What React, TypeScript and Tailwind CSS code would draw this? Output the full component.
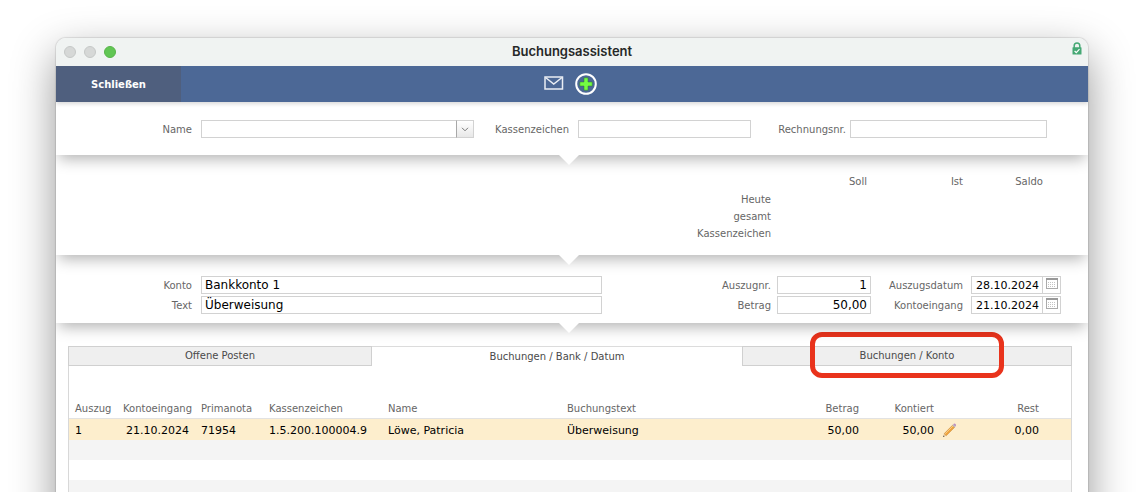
import type { ReactNode } from 'react'

interface Booking {
  auszug: string
  eingang: string
  primanota: string
  kassenzeichen: string
  name: string
  text: string
  betrag: string
  kontiert: string
  rest: string
}

const BOOKINGS: Booking[] = [
  {
    auszug: '1',
    eingang: '21.10.2024',
    primanota: '71954',
    kassenzeichen: '1.5.200.100004.9',
    name: 'Löwe, Patricia',
    text: 'Überweisung',
    betrag: '50,00',
    kontiert: '50,00',
    rest: '0,00',
  },
]

const EMPTY_ROWS = 8
const SUMMARY_ROWS = ['Heute', 'gesamt', 'Kassenzeichen']

const FIELD = 'h-[18px] w-full min-w-0 border border-[#d2d2d2] bg-white leading-[18px] text-black outline-none'
const LABEL = 'pt-0.5 text-right'

function MailIcon() {
  return (
    <svg width="20" height="14" viewBox="0 0 20 14" fill="none" stroke="#e9edf4" strokeWidth="1.5">
      <rect x="1" y="1" width="17.5" height="12" />
      <path d="M1.5 1.5 9.75 8 18 1.5" />
    </svg>
  )
}

function AddIcon() {
  return (
    <svg width="22" height="22" viewBox="0 0 22 22">
      <circle cx="11" cy="11" r="9.8" fill="none" stroke="#fff" strokeWidth="2" />
      <path
        d="M9 4.8h4V9h4.2v4H13v4.2H9V13H4.8V9H9z"
        fill="#74fb43"
        stroke="#2f7a2c"
        strokeWidth="0.5"
      />
    </svg>
  )
}

function LockIcon() {
  return (
    <svg width="10" height="13" viewBox="0 0 10 13">
      <path d="M2.2 6V3.8a2.8 2.8 0 0 1 5.6 0V6" fill="none" stroke="#45a874" strokeWidth="1.5" />
      <rect x="0.5" y="5.2" width="9" height="7.3" rx="0.6" fill="#45a874" />
      <path d="m2.6 9 1.7 1.7 3.2-3.5" fill="none" stroke="#fff" strokeWidth="1.2" />
    </svg>
  )
}

function CalendarIcon() {
  return (
    <svg width="12" height="11" viewBox="0 0 12 11">
      <rect x="0.5" y="0.5" width="11" height="10" fill="#fff" stroke="#ababab" />
      <path d="M0 1h12" stroke="#999" strokeWidth="2" />
      <path d="M2 4.5h8M2 6.5h8M2 8.5h8" stroke="#c4c4c4" strokeDasharray="1 1" />
    </svg>
  )
}

function PencilIcon() {
  return (
    <svg width="15" height="15" viewBox="0 0 15 15">
      <path d="m1 14 1.2-3.8 2.4 2.4z" fill="#e7c99c" />
      <path d="m1 14 .5-1.6 1.1 1.1z" fill="#444" />
      <path d="m2.2 10.6 8.5-8.5 2.1 2.1-8.5 8.5z" fill="#f0a33c" stroke="#b8803c" strokeWidth="0.4" />
      <path d="m3.2 10.8 8.2-8.2" stroke="#fbd38a" strokeWidth="0.9" />
      <path d="m10.3 2.3.9-.9 2.2 2.2-.9.9z" fill="#b9bcc4" />
      <path d="m11.2 1.4.6-.6q1-.5 1.7.2t.4 1.9l-.6.7z" fill="#b88fc0" />
    </svg>
  )
}

// White strip that drops a shadow and a small pointer onto the next one
function Section({ layer, children }: { layer: string; children: ReactNode }) {
  return (
    <section className={`relative bg-white shadow-[0_7px_14px_-3px_rgba(0,0,0,0.3)] ${layer}`}>
      {children}
      <svg
        className="absolute top-full left-1/2 -ml-[13px]"
        width="20"
        height="10"
        viewBox="0 0 20 10"
        aria-hidden="true"
      >
        <path d="M0 0h20l-10 10z" fill="#fff" />
      </svg>
    </section>
  )
}

function DateField({ id, value }: { id: string; value: string }) {
  return (
    <div className="flex">
      <input id={id} defaultValue={value} className={`${FIELD} pt-px pl-1 text-[11px]`} />
      <button
        type="button"
        aria-label="Kalender"
        className="flex h-[18px] w-[18px] shrink-0 justify-center border border-l-0 border-[#d2d2d2] bg-white pt-px"
      >
        <CalendarIcon />
      </button>
    </div>
  )
}

function TitleBar() {
  return (
    <header className="grid h-7 grid-cols-[1fr_auto_1fr] items-center rounded-t-[10px] bg-[#f0f3f2] px-2">
      <div className="flex gap-2">
        <span className="size-3 rounded-full border border-[#c6c9c8] bg-[#d6d8d7]" />
        <span className="size-3 rounded-full border border-[#c6c9c8] bg-[#d6d8d7]" />
        <span className="size-3 rounded-full border border-[#58b54a] bg-[#61c654]" />
      </div>
      <h1 className="pb-0.5 font-[Inter,sans-serif] text-[13px] font-semibold text-[#262827]">Buchungsassistent</h1>
      <div className="-mr-0.5 flex justify-end self-start pt-1">
        <LockIcon />
      </div>
    </header>
  )
}

function Toolbar() {
  return (
    <nav className="relative z-40 flex h-9 items-center bg-[#4c6896] pr-[128px] shadow-[0_2px_4px_rgba(0,0,0,0.15)]">
      <button type="button" className="h-full w-[125px] bg-[#4f5f7e] pt-0.5 text-[10px] font-bold text-white">
        Schließen
      </button>
      <div className="flex flex-1 items-center justify-center gap-[11px]">
        <button type="button" aria-label="Nachricht" className="pb-0.5">
          <MailIcon />
        </button>
        <button type="button" aria-label="Neu">
          <AddIcon />
        </button>
      </div>
    </nav>
  )
}

function Tab({ label, active = false, marked = false }: { label: string; active?: boolean; marked?: boolean }) {
  return (
    <button
      type="button"
      role="tab"
      aria-selected={active}
      className={
        active
          ? 'border-t border-[#dcdcdc] bg-white text-[#4a4a4a]'
          : 'relative border border-[#d0d0d0] bg-[#efefef] text-[#4a4a4a]'
      }
    >
      {label}
      {marked && (
        <span className="absolute -top-[15px] left-1/2 h-[46px] w-[194px] -translate-x-1/2 rounded-xl border-[5px] border-[#e9331c]" />
      )}
    </button>
  )
}

function BookingTable() {
  return (
    <table className="w-full table-fixed border-collapse text-left text-[11px] text-black">
      <colgroup>
        <col className="w-[54px]" />
        <col className="w-[78px]" />
        <col className="w-[68px]" />
        <col className="w-[119px]" />
        <col className="w-[179px]" />
        <col />
        <col className="w-[106px]" />
        <col className="w-[75px]" />
        <col className="w-[30px]" />
        <col className="w-[107px]" />
      </colgroup>
      <thead>
        <tr className="h-5 border-b border-[#e2e2e2] text-[10px] text-[#666] *:pt-0.5 *:font-normal">
          <th className="pl-1.5">Auszug</th>
          <th>Kontoeingang</th>
          <th>Primanota</th>
          <th>Kassenzeichen</th>
          <th>Name</th>
          <th>Buchungstext</th>
          <th className="text-right">Betrag</th>
          <th className="text-right">Kontiert</th>
          <td />
          <th className="pr-8 text-right">Rest</th>
        </tr>
      </thead>
      <tbody>
        {BOOKINGS.map((b) => (
          <tr key={b.primanota} className="h-[21px] bg-[#fdeecd] *:pt-1">
            <td className="pl-1.5">{b.auszug}</td>
            <td className="pl-[3px]">{b.eingang}</td>
            <td>{b.primanota}</td>
            <td>{b.kassenzeichen}</td>
            <td>{b.name}</td>
            <td>{b.text}</td>
            <td className="text-right">{b.betrag}</td>
            <td className="text-right">{b.kontiert}</td>
            <td className="pb-0.5 pl-2">
              <button type="button" aria-label="Bearbeiten" className="block">
                <PencilIcon />
              </button>
            </td>
            <td className="pr-8 text-right">{b.rest}</td>
          </tr>
        ))}
        {Array.from({ length: EMPTY_ROWS }).map((_, i) => (
          <tr key={i} className="h-5 even:bg-[#f4f4f4]">
            <td colSpan={10} />
          </tr>
        ))}
      </tbody>
    </table>
  )
}

export default function App() {
  return (
    <div className="h-screen overflow-hidden bg-white px-14 pt-[38px] font-['DejaVu_Sans',sans-serif] text-[10px] leading-4 text-[#666]">
      <div className="rounded-t-[10px] shadow-[0_0_1px_1px_rgba(0,0,0,0.1),0_16px_44px_rgba(0,0,0,0.42)]">
        <TitleBar />
        <div className="overflow-hidden bg-white">
          <Toolbar />

          <Section layer="z-30">
            <form className="grid grid-cols-[145px_273fr_104px_173fr_99px_197fr] items-center pt-[18px] pr-[41px] pb-[17px]">
              <label htmlFor="name" className={`${LABEL} pr-[9px]`}>
                Name
              </label>
              <div className="relative">
                <select id="name" className={`${FIELD} block appearance-none text-[12px]`}>
                  <option value="" />
                </select>
                <span className="pointer-events-none absolute inset-y-0 right-0 flex w-[18px] items-center justify-center border border-[#d2d2d2] border-l-[#a8a8a8] bg-linear-to-b from-white to-[#e8e8e8]">
                  <svg width="8" height="5" viewBox="0 0 8 5" fill="none" stroke="#777">
                    <path d="m1 .8 3 3 3-3" />
                  </svg>
                </span>
              </div>
              <label htmlFor="kassenzeichen" className={`${LABEL} pr-[9px]`}>
                Kassenzeichen
              </label>
              <input id="kassenzeichen" className={`${FIELD} px-[3px] text-[12px]`} />
              <label htmlFor="rechnungsnr" className={`${LABEL} pr-1`}>
                Rechnungsnr.
              </label>
              <input id="rechnungsnr" className={`${FIELD} px-[3px] text-[12px]`} />
            </form>
          </Section>

          <Section layer="z-20">
            <div className="flex justify-end pt-[19px] pr-[45px] pb-[13px]">
              <table className="border-collapse text-right">
                <thead>
                  <tr className="h-[17px] align-top *:font-normal">
                    <td className="w-[130px]" />
                    <th className="w-24">Soll</th>
                    <th className="w-24">Ist</th>
                    <th className="w-20">Saldo</th>
                  </tr>
                </thead>
                <tbody>
                  {SUMMARY_ROWS.map((row) => (
                    <tr key={row} className="h-[17px]">
                      <th className="font-normal">{row}</th>
                      <td />
                      <td />
                      <td />
                    </tr>
                  ))}
                </tbody>
              </table>
            </div>
          </Section>

          <Section layer="z-10">
            <form className="grid grid-cols-[145px_1fr_175px_94px_100px_90px] items-center gap-y-0.5 pt-[21px] pr-[27px] pb-[9px]">
              <label htmlFor="konto" className={`${LABEL} pr-[9px]`}>
                Konto
              </label>
              <input id="konto" defaultValue="Bankkonto 1" className={`${FIELD} px-[3px] text-[12px]`} />
              <label htmlFor="auszugnr" className={`${LABEL} pr-1.5`}>
                Auszugnr.
              </label>
              <input id="auszugnr" defaultValue="1" className={`${FIELD} px-[3px] text-right text-[12px]`} />
              <label htmlFor="auszugsdatum" className={`${LABEL} pr-2`}>
                Auszugsdatum
              </label>
              <DateField id="auszugsdatum" value="28.10.2024" />

              <label htmlFor="text" className={`${LABEL} pr-[9px]`}>
                Text
              </label>
              <input id="text" defaultValue="Überweisung" className={`${FIELD} px-[3px] text-[12px]`} />
              <label htmlFor="betrag" className={`${LABEL} pr-1.5`}>
                Betrag
              </label>
              <input id="betrag" defaultValue="50,00" className={`${FIELD} px-[3px] text-right text-[12px]`} />
              <label htmlFor="kontoeingang" className={`${LABEL} pr-2`}>
                Kontoeingang
              </label>
              <DateField id="kontoeingang" value="21.10.2024" />
            </form>
          </Section>

          <main className="pt-[23px] pr-4 pl-3">
            <div role="tablist" className="grid h-5 grid-cols-[304fr_370fr_330fr]">
              <Tab label="Offene Posten" />
              <Tab label="Buchungen / Bank / Datum" active />
              <Tab label="Buchungen / Konto" marked />
            </div>
            <div className="border-x border-[#d8d8d8] pt-8">
              <BookingTable />
            </div>
          </main>
        </div>
      </div>
    </div>
  )
}
